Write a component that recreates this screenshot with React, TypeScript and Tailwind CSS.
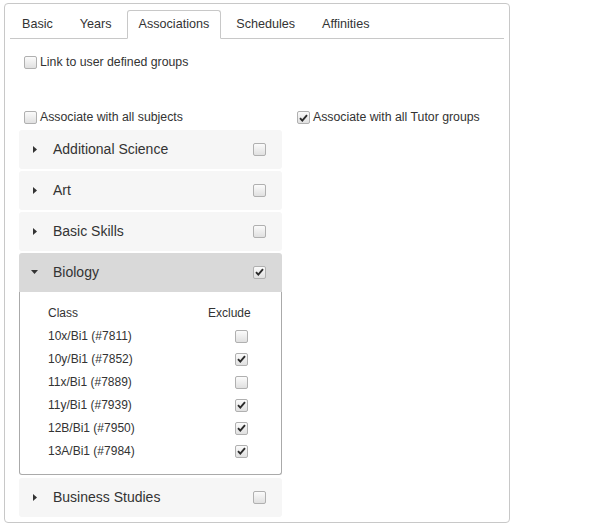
import React from "react";

const font = { fontFamily: '"Liberation Sans", Arial, sans-serif' };

function Box({ checked }: { checked?: boolean }) {
  return (
    <span className="inline-flex h-[13px] w-[13px] shrink-0 items-center justify-center rounded-[2px] border border-[#b0b0b0] bg-gradient-to-b from-[#fbfbfb] to-[#e0e0e0]">
      {checked && (
        <svg width="9" height="8" viewBox="0 0 9 8">
          <path d="M1 4.2 L3.3 6.6 L8 1.2" fill="none" stroke="#2b2b2b" strokeWidth="1.9" />
        </svg>
      )}
    </span>
  );
}

function Check({ label, checked }: { label: string; checked?: boolean }) {
  return (
    <label className="flex items-center gap-[3px] pl-[5px] text-[12.3px] text-[#333]">
      <Box checked={checked} />
      <span>{label}</span>
    </label>
  );
}

function Arrow({ open }: { open?: boolean }) {
  return open ? (
    <svg width="7" height="4" viewBox="0 0 7 4">
      <path d="M0 0 H7 L3.5 4 Z" fill="#333" />
    </svg>
  ) : (
    <svg width="4" height="7" viewBox="0 0 4 7">
      <path d="M0 0 V7 L4 3.5 Z" fill="#333" />
    </svg>
  );
}

function SubjectRow({ name, checked, open }: { name: string; checked?: boolean; open?: boolean }) {
  return (
    <div
      className={`flex h-[39px] items-center pr-[16px] text-[14px] text-[#333] ${
        open ? "rounded-t-[3px] bg-[#d9d9d9]" : "rounded-[3px] bg-[#f6f6f6]"
      }`}
    >
      <span className={`flex w-[34px] justify-end ${open ? "pr-[15px]" : "pr-[16px]"}`}>
        <Arrow open={open} />
      </span>
      <span className="flex-1">{name}</span>
      <Box checked={checked} />
    </div>
  );
}

const classes: [string, boolean][] = [
  ["10x/Bi1 (#7811)", false],
  ["10y/Bi1 (#7852)", true],
  ["11x/Bi1 (#7889)", false],
  ["11y/Bi1 (#7939)", true],
  ["12B/Bi1 (#7950)", true],
  ["13A/Bi1 (#7984)", true],
];

const tabs = ["Basic", "Years", "Associations", "Schedules", "Affinities"];

export default function App() {
  return (
    <div className="bg-white pl-[4px] pt-[3px]" style={font}>
      <div className="h-[520px] w-[506px] rounded-[4px] border border-[#c8c8c8] px-[5px] pt-[6px]">
        <div className="flex h-[29px] border-b border-[#c8c8c8]">
          {tabs.map((t) => (
            <div
              key={t}
              className={`mr-[3px] h-[29px] px-[11px] text-[12.6px] leading-[27px] text-[#333] ${
                t === "Associations"
                  ? "rounded-t-[3px] border border-b-white border-[#c8c8c8] bg-white"
                  : "border border-transparent"
              }`}
            >
              {t}
            </div>
          ))}
        </div>

        <div className="px-[9px]">
          <div className="mt-[14px]">
            <Check label="Link to user defined groups" />
          </div>

          <div className="mt-[37px] flex">
            <div className="w-[263px]">
              <Check label="Associate with all subjects" />
              <div className="mt-[3px] flex flex-col gap-[2px]">
                <SubjectRow name="Additional Science" />
                <SubjectRow name="Art" />
                <SubjectRow name="Basic Skills" />
                <div>
                  <SubjectRow name="Biology" checked open />
                  <div className="rounded-b-[3px] border border-t-0 border-[#aaa] pb-[11px] pl-[28px] pt-[10px] text-[12px] text-[#333]">
                    <div className="flex h-[23px] items-center">
                      <span className="w-[160px]">Class</span>
                      <span>Exclude</span>
                    </div>
                    {classes.map(([c, ch]) => (
                      <div key={c} className="flex h-[23px] items-center">
                        <span className="w-[187px]">{c}</span>
                        <Box checked={ch} />
                      </div>
                    ))}
                  </div>
                </div>
                <div className="mt-[1px]">
                  <SubjectRow name="Business Studies" />
                </div>
              </div>
            </div>
            <div className="pl-[10px]">
              <Check label="Associate with all Tutor groups" checked />
            </div>
          </div>
        </div>
      </div>
    </div>
  );
}
